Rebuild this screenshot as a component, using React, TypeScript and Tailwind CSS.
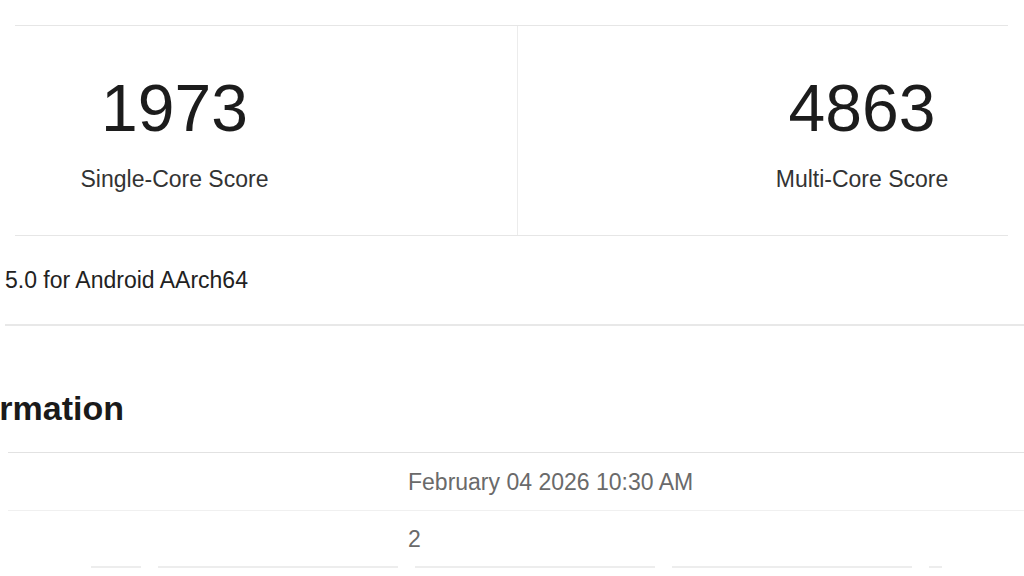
import React from 'react';

const rows = [
  { label: 'Upload Date', value: 'February 04 2026 10:30 AM', height: 'h-[58px] border-b border-[#f0f0f0]' },
  { label: 'Views', value: '2', height: 'h-[55px]' },
];

const App: React.FC = () => {
  return (
    <div className="w-[1024px] h-[576px] overflow-hidden bg-white font-['Liberation_Sans',Arial,sans-serif]">
      <div className="pt-[25px]">
        {/* score card */}
        <div className="ml-[15px] mr-[16px] border-t border-b border-[#e6e6e6]">
          <div className="flex -ml-[15px]">
            <div className="w-[518px] border-r border-[#ececec] pr-[168px] pt-[48px] pb-[42px] text-center">
              <div className="text-[66px] leading-[68px] text-[#1c1c1c]">1973</div>
              <div className="mt-[23px] text-[23px] leading-[28px] text-[#333]">Single-Core Score</div>
            </div>
            <div className="flex-1 pl-[198px] pt-[48px] pb-[42px] text-center">
              <div className="text-[66px] leading-[68px] text-[#1c1c1c]">4863</div>
              <div className="mt-[23px] text-[23px] leading-[28px] text-[#333]">Multi-Core Score</div>
            </div>
          </div>
        </div>

        {/* version row */}
        <div className="ml-[5px] h-[90px] flex items-center border-b-2 border-[#e8e8e8]">
          <span className="text-[23px] leading-[28px] text-[#222]">5.0 for Android AArch64</span>
        </div>

        {/* system information */}
        <div className="pt-[64px]">
          <h2 className="-ml-[63px] text-[34px] leading-[36px] font-bold text-[#1a1a1a]">Information</h2>
        </div>
        <div className="ml-[8px] mt-[26px] border-t border-[#e2e2e2]">
          {rows.map((row) => (
            <div key={row.label} className={`flex items-center ${row.height}`}>
              <div className="w-[400px] text-[23px] text-transparent select-none">{row.label}</div>
              <div className="text-[23px] leading-[28px] text-[#6a6a6a]">{row.value}</div>
            </div>
          ))}
        </div>

        {/* next row, cut off at the bottom edge */}
        <div className="flex items-center gap-[17px] pl-[91px]">
          <div className="h-[2px] w-[50px] bg-[#ededed]" />
          <div className="h-[2px] w-[240px] bg-[#ededed]" />
          <div className="h-[2px] w-[240px] bg-[#ededed]" />
          <div className="h-[2px] w-[240px] bg-[#ededed]" />
          <div className="h-[2px] w-[13px] bg-[#ededed]" />
        </div>
      </div>
    </div>
  );
};

export default App;
